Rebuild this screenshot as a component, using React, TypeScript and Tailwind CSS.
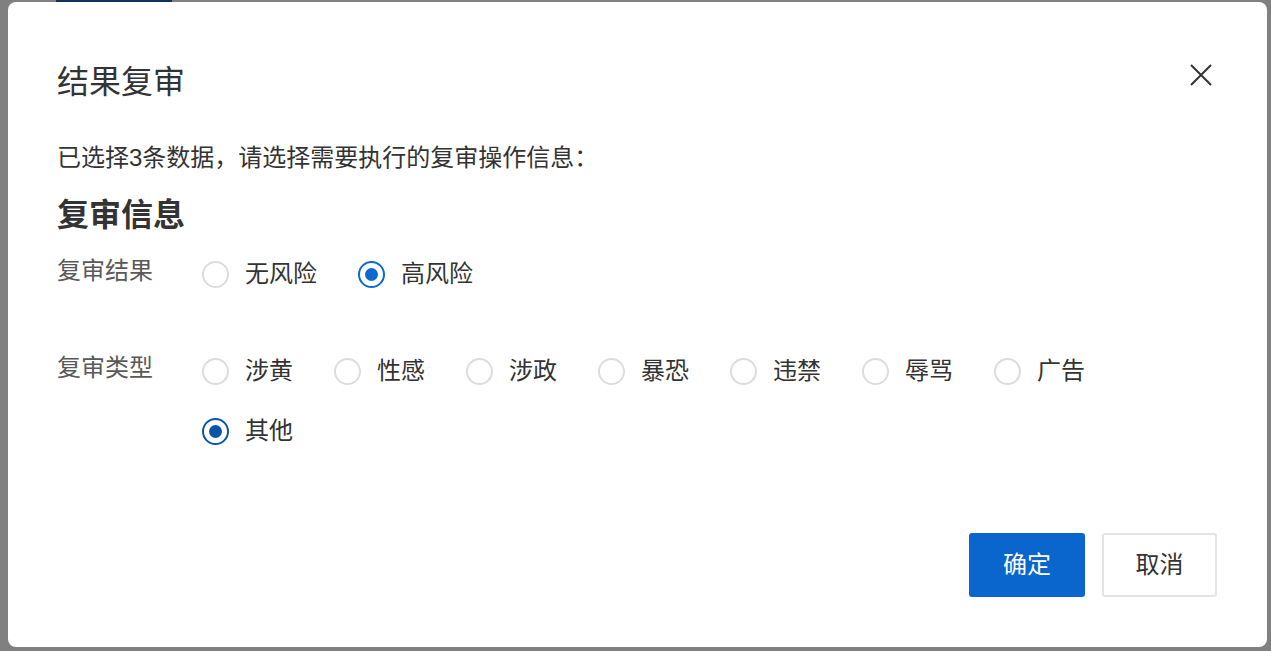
import { useState } from "react";

const FONT = { fontFamily: '"Liberation Sans", "Noto Sans CJK SC", sans-serif' };

const RESULTS = ["无风险", "高风险"];
const TYPES = ["涉黄", "性感", "涉政", "暴恐", "违禁", "辱骂", "广告", "其他"];

function Radio({
  label,
  checked,
  dark,
  onClick,
}: {
  label: string;
  checked: boolean;
  dark?: boolean;
  onClick: () => void;
}) {
  const ring = dark ? "border-[#0a56a6]" : "border-[#0b69d2]";
  const dot = dark ? "bg-[#0a56a6]" : "bg-[#0b69d2]";
  return (
    <button type="button" onClick={onClick} className="mr-[41px] flex h-9 items-center gap-4">
      <span
        className={[
          "flex h-[27px] w-[27px] shrink-0 items-center justify-center rounded-full border-2 bg-white",
          checked ? ring : "border-[#dcdcdc]",
        ].join(" ")}
      >
        {checked && <span className={`h-[13px] w-[13px] rounded-full ${dot}`} />}
      </span>
      <span className="text-[24px] leading-9 text-[#333333]">{label}</span>
    </button>
  );
}

export default function App() {
  const [result, setResult] = useState("高风险");
  const [type, setType] = useState("其他");

  return (
    <div className="h-[651px] w-[1271px] overflow-hidden bg-[#808080]" style={FONT}>
      {/* page behind the mask */}
      <div className="flex h-[2px]">
        <div className="ml-[56px] w-[116px] bg-[#12305c]" />
      </div>

      {/* Dialog */}
      <div className="ml-[8px] mr-[4px] flex h-[645px] flex-col rounded-[8px] bg-white pb-[50px] pl-[49px] pr-[50px] pt-[60px]">
        {/* Header */}
        <div className="flex items-start justify-between">
          <h2 className="text-[32px] font-normal leading-10 text-[#333333]">结果复审</h2>
          <button type="button" className="mr-[4px] mt-[1px] flex h-6 w-6 items-center justify-center">
            <svg width="24" height="24" viewBox="0 0 24 24" fill="none">
              <path d="M2 2L22 22M22 2L2 22" stroke="#333333" strokeWidth="2" />
            </svg>
          </button>
        </div>

        <p className="mt-[40px] text-[24px] leading-8 text-[#333333]">
          已选择3条数据，请选择需要执行的复审操作信息：
        </p>

        <h3 className="mt-[21px] text-[32px] font-bold leading-10 text-[#333333]">复审信息</h3>

        {/* 复审结果 */}
        <div className="mt-[21px] flex">
          <div className="w-[145px] shrink-0 text-[24px] leading-[30px] text-[#595959]">复审结果</div>
          <div className="flex flex-wrap gap-y-6">
            {RESULTS.map((r) => (
              <Radio key={r} label={r} checked={result === r} onClick={() => setResult(r)} />
            ))}
          </div>
        </div>

        {/* 复审类型 */}
        <div className="mt-[61px] flex">
          <div className="w-[145px] shrink-0 text-[24px] leading-[30px] text-[#595959]">复审类型</div>
          <div className="flex flex-1 flex-wrap gap-y-6">
            {TYPES.map((t) => (
              <Radio key={t} label={t} checked={type === t} dark onClick={() => setType(t)} />
            ))}
          </div>
        </div>

        {/* Footer */}
        <div className="mt-auto flex justify-end gap-[17px]">
          <button
            type="button"
            className="h-16 w-[116px] rounded-[3px] bg-[#0a66cc] text-[24px] text-white"
          >
            确定
          </button>
          <button
            type="button"
            className="h-16 w-[115px] rounded-[3px] border-2 border-[#e4e4e4] bg-white text-[24px] text-[#333333]"
          >
            取消
          </button>
        </div>
      </div>
    </div>
  );
}
